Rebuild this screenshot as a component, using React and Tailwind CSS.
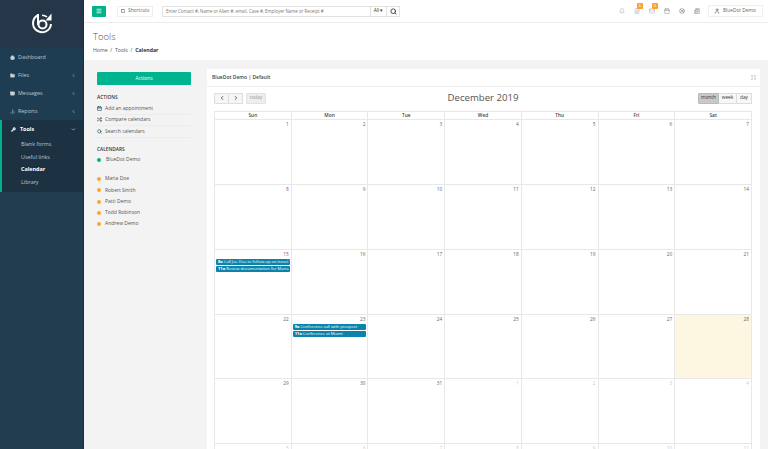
import React from 'react';
import { Home, Folder, Mail, BarChart2, Wrench, ChevronLeft, ChevronDown, ChevronRight, Calendar, Shuffle, Search, Bell, FileText, LifeBuoy, Newspaper, User, Menu, Square, Expand } from 'lucide-react';

const nav = [
  { label: 'Dashboard', icon: Home },
  { label: 'Files', icon: Folder, arrow: true },
  { label: 'Messages', icon: Mail, arrow: true },
  { label: 'Reports', icon: BarChart2, arrow: true },
];

const people = ['Maria Doe', 'Robert Smith', 'Patti Demo', 'Todd Robinson', 'Andrew Demo'];
const days = ['Sun', 'Mon', 'Tue', 'Wed', 'Thu', 'Fri', 'Sat'];

const weeks = [
  { h: 'h-[65px]', cells: [1, 2, 3, 4, 5, 6, 7] },
  { h: 'h-[65px]', cells: [8, 9, 10, 11, 12, 13, 14] },
  { h: 'h-[65px]', cells: [15, 16, 17, 18, 19, 20, 21] },
  { h: 'h-[64px]', cells: [22, 23, 24, 25, 26, 27, 28] },
  { h: 'h-[65px]', cells: [29, 30, 31, 1, 2, 3, 4], muted: [3, 4, 5, 6] },
  { h: 'h-[65px]', cells: [5, 6, 7, 8, 9, 10, 11], muted: [0, 1, 2, 3, 4, 5, 6] },
];

const events = {
  15: [['8a', 'Call Joe Doe to follow-up on travel'], ['11a', 'Review documentation for Maria']],
  23: [['9a', 'Conference call with prospect'], ['11a', 'Conference at Miami']],
};

function Event({ time, title }) {
  return (
    <div className="mx-px mb-px h-[6px] overflow-hidden whitespace-nowrap rounded-[1px] bg-[#0a84ad] pl-[2px] text-[4.1px] leading-[6px] text-white">
      <b className="mr-[1px]">{time}</b>{title}
    </div>
  );
}

function Sidebar() {
  return (
    <aside className="flex h-full w-[84px] shrink-0 flex-col border-r border-[#16303f] bg-[#223d4f]">
      <div className="flex h-[48px] items-center justify-center bg-[#253648]">
        <svg width="22" height="24" viewBox="0 0 22 24" fill="none" stroke="#fff">
          <path d="M7 3.2A9 9 0 1 0 20 12" strokeWidth="2" />
          <path d="M7 2v11" strokeWidth="2" />
          <circle cx="11.5" cy="12.5" r="4" strokeWidth="2" />
          <path d="M11 3.2a9 9 0 0 1 5 1.6" strokeWidth="1.6" />
          <path d="M20.5 1.5v7h-6z" fill="#fff" stroke="none" />
        </svg>
      </div>
      <nav className="text-[5.4px] text-[#b8c6cf]">
        {nav.map(({ label, icon: Icon, arrow }) => (
          <div key={label} className="flex h-[18px] items-center bg-[#1f3d52] pl-[10px] pr-[7px]">
            <Icon size={5} strokeWidth={2} fill="currentColor" className="mr-[3px] text-[#c6d1d8]" />
            <span className="flex-1">{label}</span>
            {arrow && <ChevronLeft size={5} strokeWidth={2.5} />}
          </div>
        ))}
        <div className="border-l-2 border-[#00b388] bg-[#1c3242] pb-[3px]">
          <div className="flex h-[18px] items-center pl-[9px] pr-[7px] font-bold text-white">
            <Wrench size={5} strokeWidth={2.5} fill="currentColor" className="mr-[4px]" />
            <span className="flex-1">Tools</span>
            <ChevronDown size={5} strokeWidth={2.5} />
          </div>
          <div className="pl-[19px] leading-[12.7px]">
            <div>Blank forms</div>
            <div>Useful links</div>
            <div className="font-bold text-white">Calendar</div>
            <div>Library</div>
          </div>
        </div>
      </nav>
    </aside>
  );
}

function TopBar() {
  return (
    <header className="flex h-[23px] shrink-0 items-center border-b border-[#ececec] bg-white pl-[8px] pr-[5px] text-[4.8px] text-[#666]">
      <div className="flex h-[11px] w-[14px] items-center justify-center rounded-[1px] bg-[#00b388]">
        <Menu size={6} strokeWidth={3} className="text-white" />
      </div>
      <div className="ml-[11px] flex h-[11px] w-[36px] items-center border border-[#efefef] pl-[3px]">
        <Square size={4} strokeWidth={3} className="mr-[3px] text-[#444]" />
        Shortcuts
      </div>
      <div className="ml-[9px] flex h-[11px] w-[238px] items-center border border-[#e2e2e2]">
        <div className="min-w-0 flex-1 whitespace-nowrap pl-[3px] text-[4.4px] text-[#777]">Enter Contact #, Name or Alien #, email, Case #, Employer Name or Receipt #</div>
        <div className="flex h-full w-[16px] shrink-0 items-center justify-center border-l border-[#e2e2e2] text-[#333]">All ▾</div>
        <div className="flex h-full w-[13px] shrink-0 items-center justify-center border-l border-[#e2e2e2]">
          <Search size={7} strokeWidth={3} className="text-[#333]" />
        </div>
      </div>
      <div className="flex-1" />
      <div className="flex items-center gap-[9px] text-[#aaa]">
        <Bell size={6} />
        <div className="relative">
          <FileText size={6} />
          <span className="absolute -right-[3px] -top-[5px] h-[6px] w-[6px] rounded-[1px] bg-[#ff9f2e] text-center text-[3.5px] leading-[6px] text-white">6</span>
        </div>
        <div className="relative">
          <Mail size={6} />
          <span className="absolute -right-[3px] -top-[5px] h-[6px] w-[6px] rounded-[1px] bg-[#ff9f2e] text-center text-[3.5px] leading-[6px] text-white">6</span>
        </div>
        <Calendar size={6} className="text-[#888]" />
        <LifeBuoy size={6} className="text-[#888]" />
        <Newspaper size={6} className="text-[#888]" />
      </div>
      <div className="ml-[8px] flex h-[12px] w-[55px] items-center border border-[#f0f0f0] pl-[5px]">
        <User size={6} className="mr-[3px] text-[#444]" />
        BlueDot Demo
      </div>
    </header>
  );
}

function ActionsPanel() {
  return (
    <div className="ml-[13px] mr-[16px] w-[94px] shrink-0 pt-[12px] text-[5px] text-[#555]">
      <div className="flex h-[13px] items-center justify-center rounded-[1px] bg-[#00b48f] text-white">Actions</div>
      <div className="mb-[2px] mt-[9px] text-[4.8px] font-semibold text-[#333]">ACTIONS</div>
      {[['Add an appointment', Calendar], ['Compare calendars', Shuffle], ['Search calendars', Search]].map(([label, Icon]) => (
        <div key={label} className="flex h-[11.5px] items-center border-b border-[#ececec] last:border-0">
          <Icon size={5} strokeWidth={3} className="mr-[3px] text-[#2c4a5e]" />
          {label}
        </div>
      ))}
      <div className="mt-[8px] text-[4.8px] font-semibold text-[#333]">CALENDARS</div>
      <div className="mt-[3px] flex items-center">
        <span className="mr-[5px] h-[4px] w-[4px] rounded-full bg-[#00b48f]" />
        BlueDot Demo
      </div>
      <div className="mt-[10px]">
        {people.map((name) => (
          <div key={name} className="flex h-[11.3px] items-center">
            <span className="mr-[4px] h-[4px] w-[4px] rounded-full bg-[#ffa52f]" />
            {name}
          </div>
        ))}
      </div>
    </div>
  );
}

function CalendarPanel() {
  return (
    <div className="mr-[8px] mt-[9px] flex-1 overflow-hidden bg-white">
      <div className="flex h-[18px] items-center justify-between border-b border-[#f0f0f0] pl-[5px] pr-[4px] text-[5px] font-semibold text-[#444]">
        BlueDot Demo | Default
        <Expand size={5} className="text-[#aaa]" />
      </div>
      <div className="pl-[7px] pr-[8px]">
        <div className="grid h-[24px] grid-cols-[1fr_auto_1fr] items-center pb-[2px]">
          <div className="flex items-center">
            <div className="flex h-[11px] w-[15px] items-center justify-center rounded-l-[1px] border border-[#ddd] bg-[#f6f6f6]"><ChevronLeft size={6} strokeWidth={3} className="text-[#333]" /></div>
            <div className="flex h-[11px] w-[14px] items-center justify-center rounded-r-[1px] border border-l-0 border-[#ddd] bg-[#f6f6f6]"><ChevronRight size={6} strokeWidth={3} className="text-[#333]" /></div>
            <div className="ml-[3px] flex h-[11px] w-[20px] items-center justify-center rounded-[1px] border border-[#e2e2e2] bg-[#eee] text-[4.8px] text-[#999]">today</div>
          </div>
          <div className="whitespace-nowrap text-[9.6px] text-[#555]">December 2019</div>
          <div className="flex items-center justify-end text-[4.8px] text-[#333]">
            <div className="flex h-[11px] w-[21px] items-center justify-center rounded-l-[1px] border border-[#bbb] bg-[#c9c9c9]">month</div>
            <div className="flex h-[11px] w-[18px] items-center justify-center border border-l-0 border-[#ddd] bg-[#f7f7f7]">week</div>
            <div className="flex h-[11px] w-[15px] items-center justify-center rounded-r-[1px] border border-l-0 border-[#ddd] bg-[#f7f7f7]">day</div>
          </div>
        </div>
        <div className="border-l border-t border-[#e8e8e8]">
          <div className="grid h-[8px] grid-cols-7 text-center text-[4.8px] font-semibold leading-[7px] text-[#444]">
            {days.map((d) => <div key={d} className="border-b border-r border-[#e8e8e8]">{d}</div>)}
          </div>
          {weeks.map((week, w) => (
            <div key={w} className={`grid grid-cols-7 ${week.h}`}>
              {week.cells.map((n, i) => {
                const muted = week.muted && week.muted.includes(i);
                const today = w === 3 && n === 28;
                return (
                  <div key={i} className={`border-b border-r border-[#e8e8e8] ${today ? 'bg-[#fdf6e0]' : ''}`}>
                    <div className={`pr-[2px] text-right text-[4.8px] leading-[8px] ${muted ? 'text-[#ccc]' : 'text-[#666]'}`}>{n}</div>
                    {!muted && events[n] && (
                      <div className="mt-px">
                        {events[n].map(([t, title]) => <Event key={title} time={t} title={title} />)}
                      </div>
                    )}
                  </div>
                );
              })}
            </div>
          ))}
        </div>
      </div>
    </div>
  );
}

export default function App() {
  return (
    <div className="flex h-[449px] w-[768px] overflow-hidden bg-[#f3f3f3] font-['Open_Sans',sans-serif]">
      <Sidebar />
      <div className="flex min-w-0 flex-1 flex-col">
        <TopBar />
        <div className="h-[37px] shrink-0 bg-white pl-[9px]">
          <div className="pt-[7px] text-[9.5px] font-light leading-[13px] text-[#555]">Tools</div>
          <div className="mt-[4px] text-[5.2px] leading-[7px] text-[#555]">
            Home&nbsp; /&nbsp; Tools&nbsp; /&nbsp; <b className="text-[#333]">Calendar</b>
          </div>
        </div>
        <div className="flex min-h-0 flex-1">
          <ActionsPanel />
          <CalendarPanel />
        </div>
      </div>
    </div>
  );
}
